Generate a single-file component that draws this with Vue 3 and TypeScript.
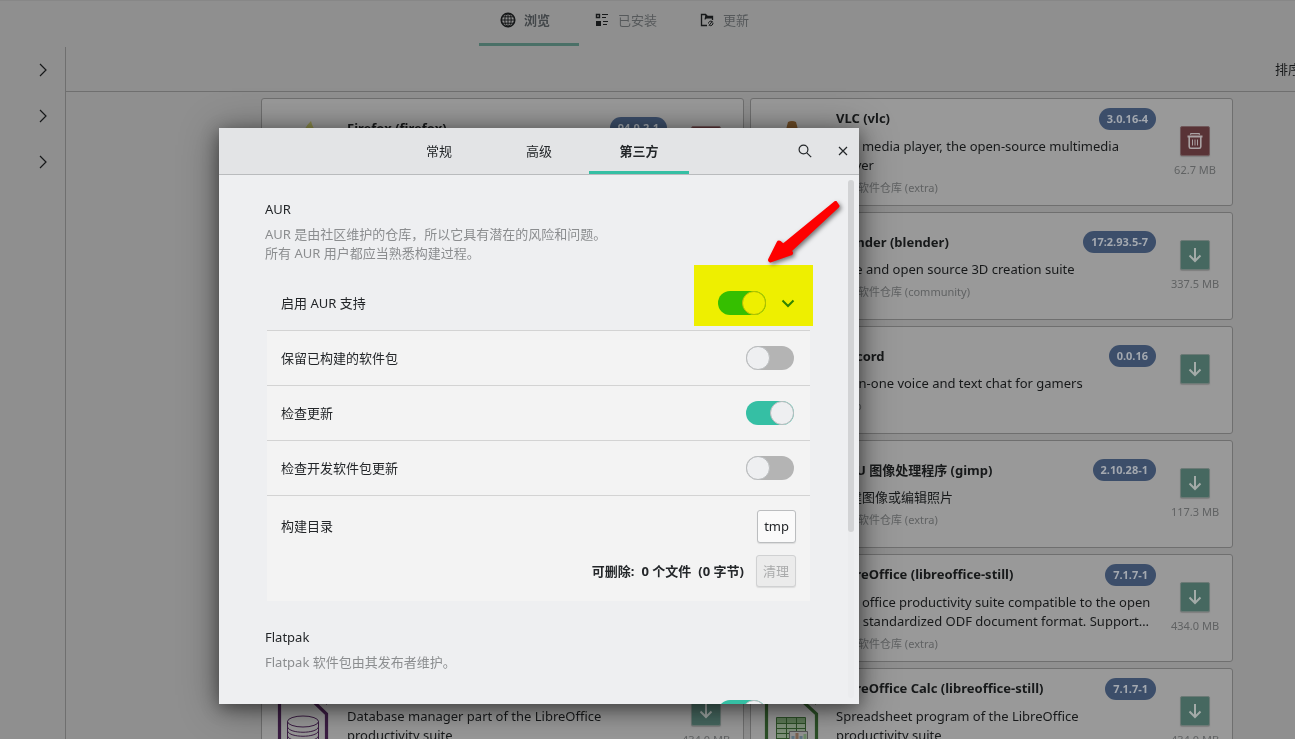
<script setup lang="ts">
import { ref } from 'vue'

interface Pkg {
  title: string
  version: string
  desc: string
  repo: string
  size: string
  column: 'left' | 'right'
  installed?: boolean
  icon?: 'firefox' | 'vlc' | 'base' | 'calc'
}

const packages: Pkg[] = [
  { title: 'Firefox (firefox)', version: '94.0.2-1', desc: '', repo: '', size: '', column: 'left', installed: true, icon: 'firefox' },
  { title: 'VLC (vlc)', version: '3.0.16-4', desc: 'VLC media player, the open-source multimedia player', repo: '官方软件仓库 (extra)', size: '62.7 MB', column: 'right', installed: true, icon: 'vlc' },
  { title: 'Blender (blender)', version: '17:2.93.5-7', desc: 'Free and open source 3D creation suite', repo: '官方软件仓库 (community)', size: '337.5 MB', column: 'right' },
  { title: 'Discord', version: '0.0.16', desc: 'All-in-one voice and text chat for gamers', repo: 'Snap', size: '', column: 'right' },
  { title: 'GNU 图像处理程序 (gimp)', version: '2.10.28-1', desc: '创建图像或编辑照片', repo: '官方软件仓库 (extra)', size: '117.3 MB', column: 'right' },
  { title: 'LibreOffice (libreoffice-still)', version: '7.1.7-1', desc: 'The office productivity suite compatible to the open and standardized ODF document format. Support…', repo: '官方软件仓库 (extra)', size: '434.0 MB', column: 'right' },
  { title: 'LibreOffice Base (libreoffice-still)', version: '7.1.7-1', desc: 'Database manager part of the LibreOffice productivity suite', repo: '官方软件仓库 (extra)', size: '434.0 MB', column: 'left', icon: 'base' },
  { title: 'LibreOffice Calc (libreoffice-still)', version: '7.1.7-1', desc: 'Spreadsheet program of the LibreOffice productivity suite', repo: '官方软件仓库 (extra)', size: '434.0 MB', column: 'right', icon: 'calc' },
]

const aurEnabled = ref(true)
const keepBuilt = ref(false)
const checkUpdates = ref(true)
const checkDevel = ref(false)
const flatpakEnabled = ref(true)
</script>

<template>
  <div class="window">
    <header class="topbar">
      <nav class="views">
        <button class="view active" type="button">
          <svg width="16" height="16" viewBox="0 0 16 16" fill="none" stroke="currentColor">
            <circle cx="8" cy="8" r="6.7" stroke-width="1.7" />
            <ellipse cx="8" cy="8" rx="3.2" ry="6.5" />
            <path d="M8 1.5v13M1.5 8h13M2.5 4.8h11M2.5 11.2h11" />
          </svg>
          <span>浏览</span>
        </button>
        <button class="view mid" type="button">
          <svg width="16" height="16" viewBox="0 0 16 16" fill="none" stroke="currentColor">
            <path d="M2.5 2.5h3v3h-3z" stroke-width="1.4" />
            <path d="M2 9h5v5H2z" fill="currentColor" stroke="none" />
            <path d="M8 2.5h6M8 5.5h4M9 9.5h5M9 12.5h4" stroke-width="1.2" />
          </svg>
          <span>已安装</span>
        </button>
        <button class="view" type="button">
          <svg width="16" height="16" viewBox="0 0 16 16" fill="none" stroke="currentColor">
            <path d="M8 13.500H2.500v-11h4l2 2h5V8" stroke-width="1.300" />
            <path d="M6.500 2.500l2 2h5v2h-6l-1 1h-1" fill="currentColor" stroke="none" />
            <path d="M9.500 11.500a2.300 2.300 0 0 1 3.600-2M13.800 10.500a2.300 2.300 0 0 1-3.600 2.600M10 13.500l3.500-4.500" />
          </svg>
          <span>更新</span>
        </button>
      </nav>
    </header>

    <div class="content">
      <aside class="sidebar">
        <button v-for="n in 3" :key="n" class="expand" type="button" aria-label="展开">
          <svg width="8" height="14" viewBox="0 0 8 14" fill="none" stroke="currentColor" stroke-width="1.2">
            <path d="M1 1l6 6-6 6" />
          </svg>
        </button>
      </aside>
      <main class="main">
        <div class="toolbar"><span class="sort">排序</span></div>
        <div class="grid">
          <article v-for="p in packages" :key="p.title" class="card" :class="p.column">
            <div class="pic">
              <svg v-if="p.icon === 'firefox'" width="64" height="64" viewBox="0 0 64 64">
                <circle cx="32" cy="37" r="26" fill="#8a5a2c" />
                <path d="M40 1c-5 5-8 10-8 15l18 6c-2-8-8-12-10-21z" fill="#8b8a4b" />
              </svg>
              <svg v-else-if="p.icon === 'vlc'" width="64" height="64" viewBox="0 0 64 64">
                <path d="M28 2q4-2 8 0l12 46H16z" fill="#6e4c27" />
                <path d="M25 18h14l3 12H22z" fill="#999" />
                <path d="M12 44h40l6 16H6z" fill="#6e4c27" />
              </svg>
              <svg v-else-if="p.icon === 'base'" width="64" height="64" viewBox="0 0 64 64" fill="none" stroke="#3b1d43">
                <path d="M8.500 62V2h24L55.500 24v38z" stroke-width="3.200" />
                <path d="M42 1h14v14z" fill="#3b1d43" stroke="none" />
                <ellipse cx="32" cy="31.500" rx="15.500" ry="5.500" />
                <path d="M16.500 31.500V58M47.500 31.500V58M16.500 37c2 7 29 7 31 0M16.500 41c2 7 29 7 31 0M16.500 46c2 7 29 7 31 0M16.500 52c2 7 29 7 31 0" />
              </svg>
              <svg v-else-if="p.icon === 'calc'" width="64" height="64" viewBox="0 0 64 64" fill="none" stroke="#2c4f27">
                <path d="M6.500 62V2h26L56.500 24v38z" stroke-width="3.200" />
                <path d="M42 1h14v14z" fill="#2c4f27" stroke="none" />
                <path d="M16.500 27.500h29v32h-29z" fill="#7f927b" />
                <path d="M17 28h28v5H17z" fill="#5d7a57" stroke="none" />
                <path d="M16.500 33.500h29M16.500 38.500h29M16.500 43.500h29M16.500 48.500h29M26.500 27.500v32M36.500 27.500v32" />
                <path d="M29.500 41.500h18v14h-18z" fill="#949494" stroke="#555" />
                <path d="M33 46v9M41 46v9" stroke="#5f7480" stroke-width="3" />
                <path d="M37 43v12" stroke="#7d6350" stroke-width="3" />
                <path d="M45 44v11" stroke="#6c8a66" stroke-width="3" />
              </svg>
            </div>
            <div class="info">
              <div class="head">
                <h3>{{ p.title }}</h3>
                <span class="badge">{{ p.version }}</span>
              </div>
              <p class="desc">{{ p.desc }}</p>
              <p class="repo">{{ p.repo }}</p>
            </div>
            <div class="action">
              <button v-if="p.installed" class="act remove" type="button" aria-label="移除">
                <svg width="16" height="16" viewBox="0 0 16 16" fill="none" stroke="currentColor">
                  <path d="M0.500 3.500h15" stroke-width="2" />
                  <path d="M3.500 1.700c0-1 .5-1.200 1-1.200h7c.5 0 1 .2 1 1.200" stroke-width="1.300" />
                  <path d="M2.200 4v9.500c0 1 .6 1.700 1.600 1.700h8.400c1 0 1.600-.7 1.600-1.700V4" stroke-width="1.600" />
                  <path d="M5.500 6.500v6M8 6.500v6M10.500 6.500v6" />
                </svg>
              </button>
              <button v-else class="act" type="button" aria-label="安装">
                <svg width="16" height="16" viewBox="0 0 16 16" fill="none" stroke="currentColor" stroke-width="2">
                  <path d="M8 1v13M2.500 8.500L8 14l5.500-5.500" />
                </svg>
              </button>
              <span class="size">{{ p.size }}</span>
            </div>
          </article>
        </div>
      </main>
    </div>

    <div class="overlay">
      <section class="dialog" role="dialog" aria-label="首选项">
        <header class="dialog-head">
          <nav class="tabs">
            <button class="tab" type="button">常规</button>
            <button class="tab" type="button">高级</button>
            <button class="tab active" type="button">第三方</button>
          </nav>
          <div class="tools">
            <button class="tool" type="button" aria-label="搜索">
              <svg width="16" height="16" viewBox="0 0 16 16" fill="none" stroke="currentColor" stroke-width="1.200">
                <circle cx="6.500" cy="6.500" r="4.400" />
                <path d="M9.800 9.800l4.400 4.400" />
              </svg>
            </button>
            <button class="tool" type="button" aria-label="关闭">
              <svg width="16" height="16" viewBox="0 0 16 16" fill="none" stroke="currentColor" stroke-width="1.200">
                <path d="M4 4l8 8M12 4l-8 8" />
              </svg>
            </button>
          </div>
        </header>

        <div class="dialog-body">
          <div class="scrollbar"><div class="thumb"></div></div>

          <h2>AUR</h2>
          <p class="hint">AUR 是由社区维护的仓库，所以它具有潜在的风险和问题。<br />所有 AUR 用户都应当熟悉构建过程。</p>
          <div class="group">
            <div class="row first">
              <label for="aur">启用 AUR 支持</label>
              <div class="controls">
                <input id="aur" v-model="aurEnabled" class="switch" type="checkbox" />
                <button class="fold" type="button" aria-label="收起">
                  <svg width="16" height="16" viewBox="0 0 16 16" fill="none" stroke="currentColor" stroke-width="2">
                    <path d="M2.500 5.500L8 11l5.500-5.500" />
                  </svg>
                </button>
              </div>
              <div class="highlight"></div>
            </div>
            <div class="row">
              <label for="keep">保留已构建的软件包</label>
              <input id="keep" v-model="keepBuilt" class="switch" type="checkbox" />
            </div>
            <div class="row">
              <label for="upd">检查更新</label>
              <input id="upd" v-model="checkUpdates" class="switch" type="checkbox" />
            </div>
            <div class="row">
              <label for="devel">检查开发软件包更新</label>
              <input id="devel" v-model="checkDevel" class="switch" type="checkbox" />
            </div>
            <div class="build">
              <div class="line">
                <label for="dir">构建目录</label>
                <button id="dir" class="btn" type="button">tmp</button>
              </div>
              <div class="line clean">
                <strong><span>可删除:</span><span>0 个文件</span><span>(0 字节)</span></strong>
                <button class="btn" type="button" disabled>清理</button>
              </div>
            </div>
          </div>

          <h2>Flatpak</h2>
          <p class="hint">Flatpak 软件包由其发布者维护。</p>
          <div class="group">
            <div class="row first">
              <span></span>
              <div class="controls">
                <input v-model="flatpakEnabled" class="switch" type="checkbox" aria-label="Flatpak" />
                <button class="fold" type="button" aria-label="展开"></button>
              </div>
            </div>
          </div>

          <svg class="arrow" width="90" height="76" viewBox="0 0 90 76" fill="#fe0000" stroke="#fe0000" stroke-linejoin="round">
            <path d="M73.500 6L21 49l5 6L75.500 9z" stroke-width="4" />
            <path d="M8.500 63L17 46l11.500 10z" stroke-width="5" />
          </svg>
        </div>
      </section>
    </div>
  </div>
</template>

<style>
html,
body {
  margin: 0;
  overflow: hidden;
}
</style>

<style scoped>
* {
  box-sizing: border-box;
}
.window {
  position: relative;
  display: flex;
  flex-direction: column;
  height: 100vh;
  overflow: hidden;
  background: #8f8f8f;
  color: #17191a;
  font: 13px/19px "Noto Sans", "Noto Sans CJK SC", sans-serif;
}
button {
  font: inherit;
  color: inherit;
  margin: 0;
  padding: 0;
  border: 0;
  background: none;
}
h2,
h3,
p {
  margin: 0;
  font-size: 13px;
}
svg {
  display: block;
}

.topbar {
  flex: none;
  display: flex;
  justify-content: center;
  height: 47px;
  padding-right: 40px;
  border-top: 1px solid #878787;
}
.views {
  display: flex;
  height: 45px;
}
.view {
  display: flex;
  align-items: center;
  justify-content: center;
  gap: 8px;
  width: 100px;
  padding: 0 4px 4px 0;
  border-bottom: 3px solid transparent;
}
.view.mid {
  width: 97px;
}
.view span {
  color: #56595b;
}
.view.active {
  padding-right: 8px;
  border-bottom-color: #4a7067;
}
.view.active span {
  color: #43474a;
  font-weight: 700;
}

.content {
  flex: 1;
  display: flex;
  min-height: 0;
}
.sidebar {
  flex: none;
  width: 66px;
  border-right: 1px solid #6f6f6f;
}
.expand {
  display: flex;
  align-items: center;
  justify-content: flex-end;
  width: 47px;
  height: 46px;
}
.main {
  flex: 1;
  min-width: 0;
  overflow: hidden;
}
.toolbar {
  display: flex;
  align-items: center;
  justify-content: flex-end;
  height: 45px;
  border-bottom: 1px solid #6f6f6f;
}
.sort {
  flex: 0 0 20px;
  min-width: 0;
  white-space: nowrap;
}
.grid {
  display: grid;
  grid-template-columns: 1fr 1fr;
  grid-auto-rows: 108px;
  gap: 6px;
  padding: 6px 62px 0 195px;
}
.card {
  display: flex;
  align-items: center;
  padding: 0 13px 0 9px;
  border: 1px solid #6f6f6f;
  border-radius: 3px;
  background: #999;
}
.card.left {
  grid-column: 1;
}
.card.right {
  grid-column: 2;
}
.pic {
  flex: none;
  width: 76px;
  height: 64px;
}
.info {
  flex: 1;
  min-width: 0;
  display: flex;
  flex-direction: column;
  padding-bottom: 1px;
}
.head {
  display: flex;
  align-items: center;
  justify-content: space-between;
  height: 22px;
}
.head h3 {
  font-weight: 700;
  white-space: nowrap;
}
.badge {
  padding: 0 8px;
  border-radius: 11px;
  background: #3c4e6a;
  color: #a4a9b0;
  font-size: 11px;
  font-weight: 700;
  line-height: 22px;
}
.desc {
  min-height: 19px;
  margin: 7px 4px 5px 0;
}
.repo,
.size {
  min-height: 16px;
  color: #606263;
  font-size: 11px;
  line-height: 16px;
}
.action {
  flex: none;
  display: flex;
  flex-direction: column;
  align-items: center;
  gap: 6px;
  width: 48px;
  margin-left: 15px;
}
.act {
  display: flex;
  align-items: center;
  justify-content: center;
  width: 30px;
  height: 30px;
  border: 1px solid #6c7a76;
  border-radius: 2px;
  background: #466860;
  color: #a3aba8;
  box-shadow: 0 1px 1px #7f7f7f;
}
.act.remove {
  border-color: #70585a;
  background: #593336;
  color: #aaa2a3;
}
.size {
  white-space: nowrap;
}

.overlay {
  position: absolute;
  inset: 0;
  padding: 128px 0 0 219px;
}
.dialog {
  display: flex;
  flex-direction: column;
  width: 640px;
  height: 576px;
  background: #eeeff1;
  color: #232629;
  box-shadow: 0 4px 16px rgba(0, 0, 0, 0.4), 0 4px 36px rgba(0, 0, 0, 0.4);
}
.dialog-head {
  flex: none;
  display: grid;
  grid-template-columns: 1fr auto 1fr;
  height: 47px;
  border-bottom: 1px solid #b9bbbd;
  background: #e3e4e6;
}
.tabs {
  grid-column: 2;
  display: flex;
}
.tab {
  width: 100px;
  border-top: 3px solid transparent;
  border-bottom: 3px solid transparent;
}
.tab.active {
  border-bottom-color: #35bfa4;
  font-weight: 700;
}
.tools {
  display: flex;
  align-items: center;
  justify-content: flex-end;
  gap: 22px;
  padding-right: 8px;
}
.dialog-body {
  position: relative;
  flex: 1;
  min-height: 0;
  overflow: hidden;
  padding: 25px 49px 0 46px;
}
.scrollbar {
  position: absolute;
  top: 5px;
  right: 5px;
  bottom: 6px;
  width: 6px;
  border-radius: 3px;
  background: #ebecee;
}
.thumb {
  height: 68%;
  border-radius: 3px;
  background: #d2d3d5;
}
h2 {
  font-weight: 400;
}
.hint {
  margin: 6px 0 13px;
  color: #8b8d8f;
}
.group {
  margin: 0 0 27px 2px;
  background: #f3f3f3;
}
.row {
  display: flex;
  align-items: center;
  justify-content: space-between;
  height: 55px;
  padding: 0 16px 0 14px;
  border-bottom: 1px solid #d3d3d3;
}
.row.first {
  position: relative;
  background: #eeeff1;
}
.controls {
  display: flex;
  align-items: center;
  gap: 14px;
}
.fold {
  width: 16px;
  height: 16px;
  margin-right: -2px;
  color: #308470;
}
.highlight {
  position: absolute;
  top: -11px;
  right: -3px;
  width: 119px;
  height: 61px;
  background: #ff0;
  mix-blend-mode: multiply;
  pointer-events: none;
}
.switch {
  appearance: none;
  width: 48px;
  height: 24px;
  margin: 0;
  border-radius: 12px;
  background: #b4b4b4;
}
.switch::before {
  content: "";
  display: block;
  box-sizing: border-box;
  width: 24px;
  height: 24px;
  border: 1px solid #b9bcbe;
  border-radius: 50%;
  background: #eeeff1;
}
.switch:checked {
  background: #35bfa4;
}
.switch:checked::before {
  margin-left: 24px;
}
.build {
  display: flex;
  flex-direction: column;
  gap: 12px;
  padding: 14px 14px 14px;
}
.line {
  display: flex;
  align-items: center;
  justify-content: space-between;
}
.line.clean {
  justify-content: flex-end;
  gap: 12px;
}
.line strong {
  display: flex;
  gap: 7px;
}
.btn {
  height: 33px;
  padding: 0 6px;
  border: 1px solid #bbbdbf;
  border-radius: 3px;
  background: #fafafa;
  box-shadow: 0 1px 1px #dcdcdc;
}
.btn:disabled {
  height: 32px;
  border-color: #d0d1d2;
  background: #ebebeb;
  color: #a9aaab;
}
.arrow {
  position: absolute;
  top: 22px;
  left: 543px;
  filter: drop-shadow(2px 2px 2px rgba(0, 0, 0, 0.5));
}
</style>
